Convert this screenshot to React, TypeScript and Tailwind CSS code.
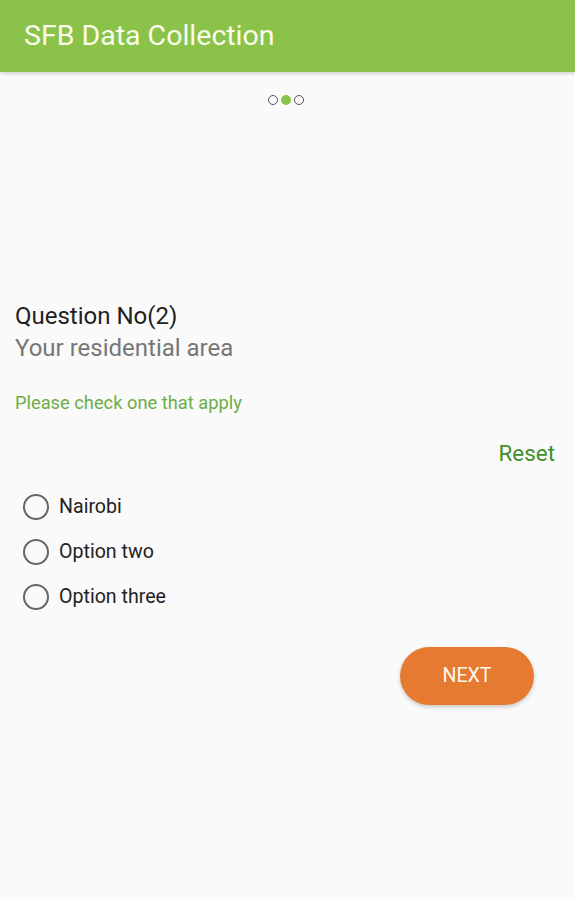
import React, { useState } from 'react'

const options = ['Nairobi', 'Option two', 'Option three']

export default function App() {
  const [selected, setSelected] = useState<number | null>(null)

  return (
    <div className="min-h-[900px] w-full bg-[#fafafa]" style={{ fontFamily: 'Roboto, "Noto Sans", sans-serif' }}>
      {/* App bar */}
      <header className="flex h-[72px] items-center bg-[#8bc34a] px-6 shadow-[0_2px_3px_rgba(0,0,0,0.15)]">
        <h1 className="text-[28.5px] font-normal text-[#fbfbea]">SFB Data Collection</h1>
      </header>

      {/* Step dots */}
      <div className="mt-[23px] flex justify-center gap-[3px] pr-[4px]">
        <span className="h-[10px] w-[10px] rounded-full border-[1.5px] border-[#555]" />
        <span className="h-[10px] w-[10px] rounded-full bg-[#8bc34a]" />
        <span className="h-[10px] w-[10px] rounded-full border-[1.5px] border-[#555]" />
      </div>

      {/* Question */}
      <section className="mt-[195px] px-[15px]">
        <h2 className="text-[24px] leading-[32px] text-[#1f1f1f]">Question No(2)</h2>
        <p className="text-[24px] leading-[32px] text-[#777]">Your residential area</p>
        <p className="mt-[26px] text-[18.3px] leading-[26px] text-[#6cae45]">Please check one that apply</p>
      </section>

      <div className="mt-[22px] flex justify-end pr-[20px]">
        <button className="text-[22.4px] leading-[30px] text-[#3f8f2a]" onClick={() => setSelected(null)}>
          Reset
        </button>
      </div>

      {/* Options */}
      <div className="mt-[25px] flex flex-col gap-[17px] pl-[23px]">
        {options.map((opt, i) => (
          <label key={i} className="flex h-[28px] cursor-pointer items-center gap-[10px]" onClick={() => setSelected(i)}>
            <span className="flex h-[26px] w-[26px] items-center justify-center rounded-full border-2 border-[#666]">
              {selected === i && <span className="h-[12px] w-[12px] rounded-full bg-[#8bc34a]" />}
            </span>
            <span className="text-[19.6px] text-[#222]">{opt}</span>
          </label>
        ))}
      </div>

      {/* Next */}
      <div className="mt-[36px] flex justify-end pr-[41px]">
        <button className="h-[58px] w-[134px] rounded-full bg-[#e67a30] text-[19.6px] text-[#fff7ee] shadow-[0_2px_4px_rgba(0,0,0,0.2)]">
          NEXT
        </button>
      </div>
    </div>
  )
}
